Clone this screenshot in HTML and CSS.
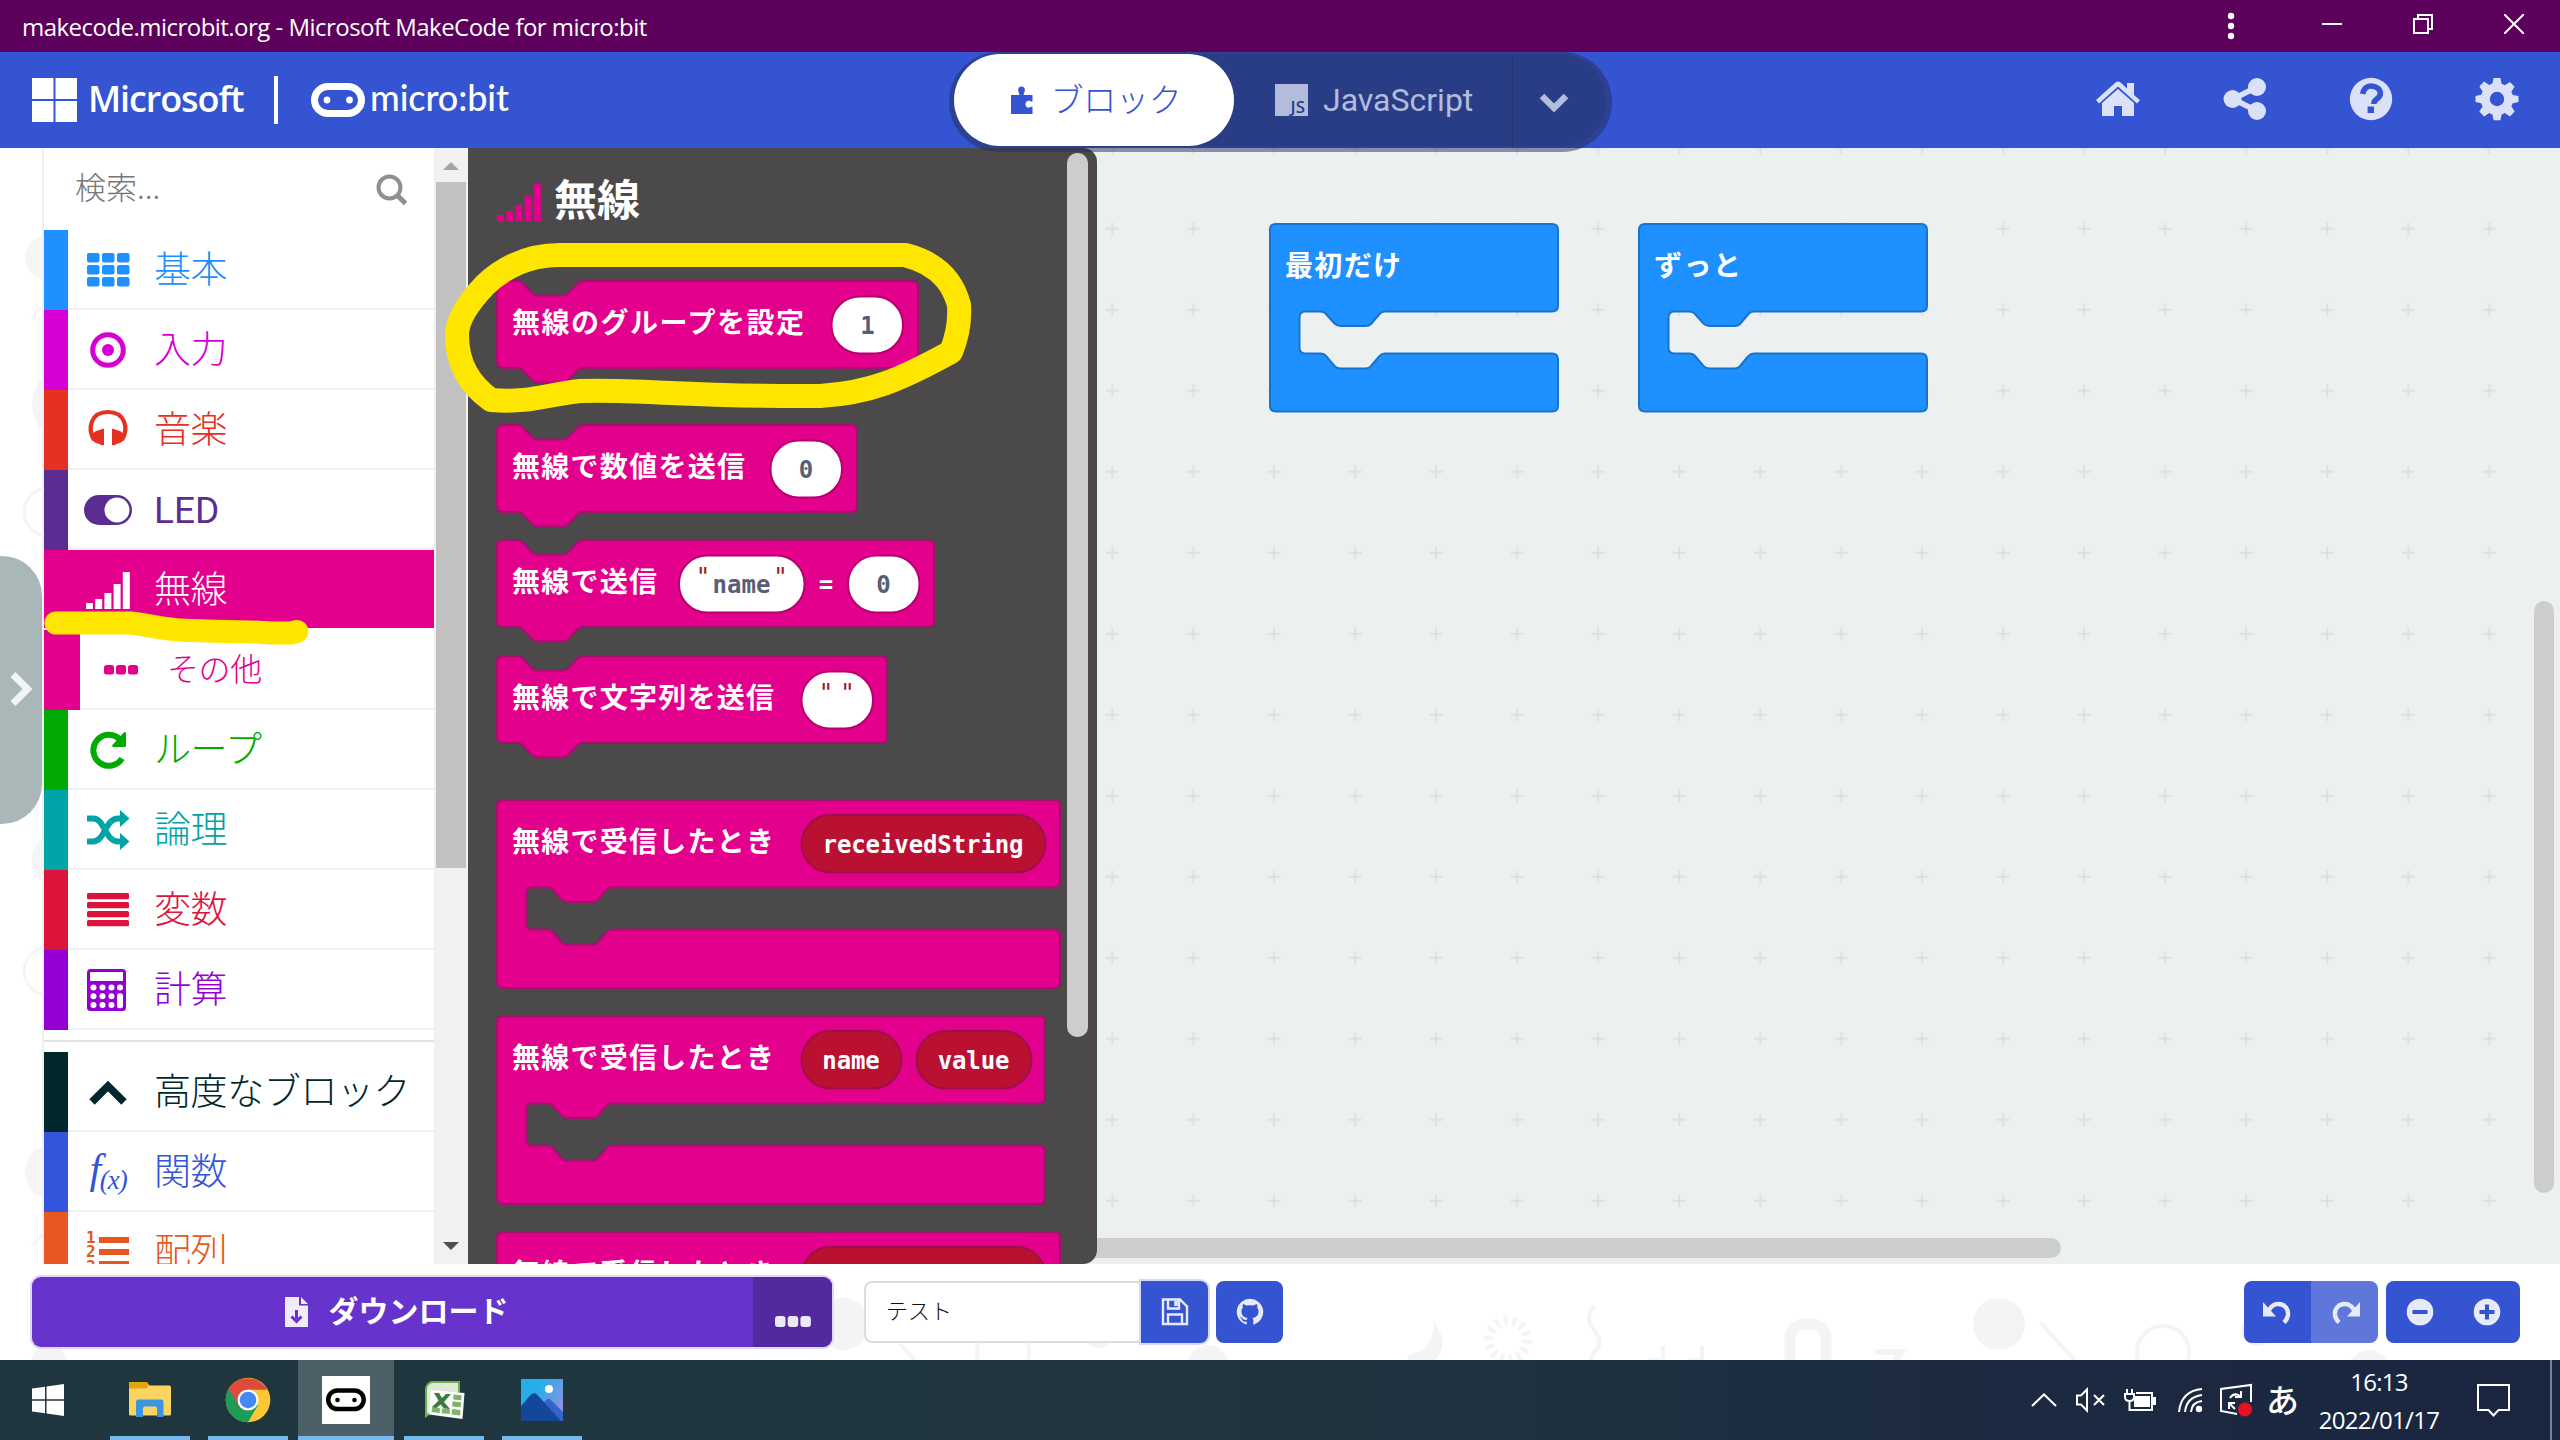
FILE: index.html
```html
<!DOCTYPE html>
<html lang="ja">
<head>
<meta charset="utf-8">
<title>makecode.microbit.org - Microsoft MakeCode for micro:bit</title>
<link rel="stylesheet" href="styles.css">
</head>
<body>
<svg width="0" height="0" class="defs" aria-hidden="true">
  <symbol id="i-signal" viewBox="0 0 44 38"><path d="M0 32h7v6H0zM9.200 28h7v10h-7zM18.400 22h7v16h-7zM27.600 13h7v25h-7zM36.800 1h7v37h-7z"/></symbol>
  <symbol id="i-loop" viewBox="0 0 38 38"><path d="M33 27.500A15.500 15.500 0 1 1 30 7.500" fill="none" stroke="currentColor" stroke-width="6"/><path d="M37 2v12.500q0 1.500-1.500 1.500H24q-1.500-1-.6-2L35 1.200q1.500-.6 2 .8z"/></symbol>
</svg>

<header class="titlebar">
  <span class="titlebar-text">makecode.microbit.org - Microsoft MakeCode for micro:bit</span>
  <div class="window-controls">
    <svg width="8" height="28" viewBox="0 0 8 28" fill="#fff"><circle cx="4" cy="4" r="3.200"/><circle cx="4" cy="14" r="3.200"/><circle cx="4" cy="24" r="3.200"/></svg>
    <svg width="20" height="20" viewBox="0 0 20 20"><path d="M0 10h20" stroke="#fff" stroke-width="2"/></svg>
    <svg width="20" height="20" viewBox="0 0 20 20" fill="none" stroke="#fff" stroke-width="2"><path d="M1 5h14v14H1zM5 5V1h14v14h-4"/></svg>
    <svg width="20" height="20" viewBox="0 0 20 20"><path d="M0 0l20 20M20 0L0 20" stroke="#fff" stroke-width="2"/></svg>
  </div>
</header>

<nav class="menubar">
  <div class="brand">
    <svg width="45" height="44" viewBox="0 0 45 44" fill="#fff"><path d="M0 0h21.500v21H0zM23.500 0H45v21H23.500zM0 23h21.500v21H0zM23.500 23H45v21H23.500z"/></svg>
    <span class="ms">Microsoft</span>
    <i class="brand-rule"></i>
    <svg width="54" height="34" viewBox="0 0 54 34"><rect x="3.500" y="3.500" width="47" height="27" rx="13.500" fill="none" stroke="#fff" stroke-width="7"/><circle cx="16" cy="17" r="3.400" fill="#fff"/><circle cx="38.500" cy="17" r="3.400" fill="#fff"/></svg>
    <span class="mb">micro:bit</span>
  </div>
  <div class="toggle">
    <div class="toggle-blocks">
      <svg width="24" height="30" viewBox="0 0 24 30" fill="#3454d1"><path d="M1 10h7.500c1.500 0 .8-1.400.2-2.600C7.300 4.400 8.600 1.500 11.500 1.500s4.200 2.900 2.800 5.900c-.6 1.200-1.300 2.600.2 2.600H22.500v6c0 1.200-1 .8-2 .3-2.600-1.400-5 .2-5 2.900s2.400 4.300 5 2.900c1-.5 2-.9 2 .3V29H1z"/></svg>
      <span>ブロック</span>
    </div>
    <div class="toggle-js">
      <span class="js-badge">JS</span><span>JavaScript</span>
    </div>
    <div class="toggle-more"><svg width="32" height="22" viewBox="0 0 32 22"><path d="M4 4l12 12L28 4" fill="none" stroke="#b4bcdb" stroke-width="6.500"/></svg></div>
  </div>
  <div class="menu-icons">
    <svg width="46" height="44" viewBox="0 0 46 44"><path d="M1 23L20.500 5.500q2.500-2 5 0L32 11.500V6h7v12l6 5.200-3 3.300L23 9.500 4 26.500z"/><path d="M7 26L23 12l16 14v13H27V29h-8v10H7z"/></svg>
    <svg width="44" height="44" viewBox="0 0 44 44"><circle cx="9.500" cy="22" r="9"/><circle cx="34" cy="10" r="9"/><circle cx="34" cy="34" r="9"/><path d="M34 10L10 22l24 12" fill="none" stroke="currentColor" stroke-width="5.500"/></svg>
    <svg width="44" height="44" viewBox="0 0 44 44"><circle cx="22" cy="22" r="21.200"/><path d="M13.700 17c1-6 5-8 8.500-8 5 0 9.200 3.200 9.200 7.500 0 5-6.400 6-6.400 9v1.500" fill="none" stroke="#3454d1" stroke-width="5.600"/><path d="M18.600 29.500H25V36h-6.400z" fill="#3454d1"/></svg>
    <svg width="44" height="44" viewBox="0 0 44 44"><path fill-rule="evenodd" d="M18.600 1h6.800l1.200 5.800 3.300 1.400 5-3.300 4.800 4.800-3.300 5 1.400 3.300L43.500 19v6l-5.700 1.300-1.400 3.300 3.300 5-4.800 4.800-5-3.300-3.300 1.400-1.200 5.800h-6.800l-1.200-5.800-3.300-1.400-5 3.300-4.800-4.800 3.300-5-1.400-3.300L.5 25v-6l5.700-1.300 1.400-3.300-3.300-5 4.800-4.800 5 3.300 3.300-1.400zM22 14.800a7.200 7.200 0 1 0 0 14.400 7.200 7.200 0 0 0 0-14.400z"/></svg>
  </div>
</nav>

<main class="editor">
  <aside class="gutter">
    <svg class="doodles" width="43" height="1116" viewBox="0 0 43 1116"><g fill="#f5f5f5"><circle cx="47" cy="110" r="22"/><ellipse cx="54" cy="256" rx="22" ry="30"/><circle cx="62" cy="712" r="30"/><circle cx="52" cy="1024" r="27"/></g><g fill="none" stroke="#f5f5f5" stroke-width="3"><circle cx="48" cy="364" r="24"/><circle cx="48" cy="823" r="24"/><path d="M32 1098l14-16M33 170q4-10 12-11"/></g></svg>
    <div class="handle"><svg width="26" height="36" viewBox="0 0 26 36"><path d="M4 3.500L18.500 18 4 32.500" fill="none" stroke="#f2f5f5" stroke-width="7"/></svg></div>
  </aside>

  <section class="toolbox">
    <div class="toolbox-list">
      <div class="search"><span>検索...</span>
        <svg width="32" height="32" viewBox="0 0 32 32" fill="none" stroke="#8f8f8f"><circle cx="13.500" cy="13.500" r="11" stroke-width="4"/><path d="M21.500 21.500l8 8" stroke-width="5"/></svg></div>
      <div class="cat c-basic"><svg width="44" height="44" viewBox="0 0 44 44"><g><rect x="1" y="5" width="12.500" height="9.500" rx="2"/><rect x="16" y="5" width="12.500" height="9.500" rx="2"/><rect x="31" y="5" width="12.500" height="9.500" rx="2"/><rect x="1" y="17" width="12.500" height="9.500" rx="2"/><rect x="16" y="17" width="12.500" height="9.500" rx="2"/><rect x="31" y="17" width="12.500" height="9.500" rx="2"/><rect x="1" y="29" width="12.500" height="9.500" rx="2"/><rect x="16" y="29" width="12.500" height="9.500" rx="2"/><rect x="31" y="29" width="12.500" height="9.500" rx="2"/></g></svg><span>基本</span></div>
      <div class="cat c-input"><svg width="44" height="44" viewBox="0 0 44 44"><circle cx="22" cy="22" r="15.300" fill="none" stroke="currentColor" stroke-width="5"/><circle cx="22" cy="22" r="6"/></svg><span>入力</span></div>
      <div class="cat c-music"><svg width="44" height="44" viewBox="0 0 44 44"><path d="M8 32C1 20 5 4 22 4s21 16 14 28" fill="none" stroke="currentColor" stroke-width="4.200"/><path d="M14 22q4-3 4 0v15q-4 1-4-1-8-1-8-7t8-7zM30 22q-4-3-4 0v15q4 1 4-1 8-1 8-7t-8-7z"/></svg><span>音楽</span></div>
      <div class="cat c-led"><svg width="50" height="44" viewBox="0 0 50 44"><rect x="1" y="7" width="48" height="30" rx="15"/><circle cx="34" cy="22" r="12.500" fill="#fff"/></svg><span>LED</span></div>
      <div class="cat c-radio"><svg width="44" height="38"><use href="#i-signal"/></svg><span>無線</span></div>
      <div class="cat sub c-more"><svg width="34" height="10" viewBox="0 0 34 10"><rect width="10" height="9.500" rx="2.500"/><rect x="12" width="10" height="9.500" rx="2.500"/><rect x="24" width="10" height="9.500" rx="2.500"/></svg><span>その他</span></div>
      <div class="cat c-loops"><svg width="38" height="38"><use href="#i-loop"/></svg><span>ループ</span></div>
      <div class="cat c-logic"><svg width="44" height="40" viewBox="0 0 44 40"><path d="M1 8.500h6c12 0 12 23 25 23h3M1 31.500h6c12 0 12-23 25-23h3" fill="none" stroke="currentColor" stroke-width="6"/><path d="M34 0v17l9.500-8.500zM34 23v17l9.500-8.500z"/></svg><span>論理</span></div>
      <div class="cat c-vars"><svg width="44" height="36" viewBox="0 0 44 36"><rect x="1" y="1" width="42" height="6.300" rx="1.500"/><rect x="1" y="10" width="42" height="6.300" rx="1.500"/><rect x="1" y="19" width="42" height="6.300" rx="1.500"/><rect x="1" y="28" width="42" height="6.300" rx="1.500"/></svg><span>変数</span></div>
      <div class="cat c-math"><svg width="42" height="42" viewBox="0 0 42 42"><rect width="39" height="42" rx="3.500"/><g fill="#fff"><rect x="3" y="3" width="33" height="9" rx="1"/><circle cx="6.500" cy="18.500" r="3"/><circle cx="15.500" cy="18.500" r="3"/><circle cx="24.500" cy="18.500" r="3"/><circle cx="33" cy="18.500" r="3"/><circle cx="6.500" cy="27.300" r="3"/><circle cx="15.500" cy="27.300" r="3"/><circle cx="24.500" cy="27.300" r="3"/><circle cx="6.500" cy="36" r="3"/><circle cx="15.500" cy="36" r="3"/><circle cx="24.500" cy="36" r="3"/><rect x="30" y="24.300" width="6" height="15" rx="2.500"/></g></svg><span>計算</span></div>
      <hr class="divider">
      <div class="cat c-adv"><svg width="40" height="40" viewBox="0 0 40 40"><path d="M4 30l16-16 16 16" fill="none" stroke="currentColor" stroke-width="7.500"/></svg><span>高度なブロック</span></div>
      <div class="cat c-func"><span class="fx">f<small>(x)</small></span><span>関数</span></div>
      <div class="cat c-array"><svg width="44" height="44" viewBox="0 0 44 44"><path d="M13 7h30v6H13zM13 19h30v6H13zM13 31h30v6H13z"/><text x="0" y="12.500" class="num">1</text><text x="0" y="27" class="num">2</text><text x="0" y="41.500" class="num">3</text></svg><span>配列</span></div>
    </div>
    <div class="scrolltrack">
      <i class="arrow up"></i><i class="thumb"></i><i class="arrow down"></i>
    </div>
  </section>

  <section class="flyout">
    <div class="flyout-body">
      <h2><svg width="44" height="38"><use href="#i-signal"/></svg>無線</h2>
      <svg class="blk gap-l" width="421" height="87"><path class="shape" d="M0 6Q0 0 6 0H20Q24 0 26.500 3L35 12Q37 14.500 41 14.500H66Q69.500 14.500 71.500 12L80 3Q82.500 0 86 0H415Q421 0 421 6V81Q421 87 415 87H86Q82.500 87 80 90L71.500 99Q69.500 101.500 66 101.500H41Q37 101.500 35 99L26.500 90Q24 87 20 87H6Q0 87 0 81Z"/><text x="15" y="52" textLength="292">無線のグループを設定</text><rect class="val" x="334.500" y="15.500" width="71.500" height="57" rx="28"/><text class="num-val" x="370.500" y="52.500">1</text></svg>
      <svg class="blk gap-s" width="360" height="87"><path class="shape" d="M0 6Q0 0 6 0H20Q24 0 26.500 3L35 12Q37 14.500 41 14.500H66Q69.500 14.500 71.500 12L80 3Q82.500 0 86 0H354Q360 0 360 6V81Q360 87 354 87H86Q82.500 87 80 90L71.500 99Q69.500 101.500 66 101.500H41Q37 101.500 35 99L26.500 90Q24 87 20 87H6Q0 87 0 81Z"/><text x="15" y="52" textLength="233">無線で数値を送信</text><rect class="val" x="273.500" y="15.500" width="71.500" height="57" rx="28"/><text class="num-val" x="309" y="52.500">0</text></svg>
      <svg class="blk gap-s" width="437" height="87"><path class="shape" d="M0 6Q0 0 6 0H20Q24 0 26.500 3L35 12Q37 14.500 41 14.500H66Q69.500 14.500 71.500 12L80 3Q82.500 0 86 0H431Q437 0 437 6V81Q437 87 431 87H86Q82.500 87 80 90L71.500 99Q69.500 101.500 66 101.500H41Q37 101.500 35 99L26.500 90Q24 87 20 87H6Q0 87 0 81Z"/><text x="15" y="52" textLength="145">無線で送信</text><rect class="val" x="182" y="15.500" width="125.500" height="57" rx="28"/><text class="quote" x="206" y="45">"</text><text class="num-val" x="244.500" y="53">name</text><text class="quote" x="283.500" y="45">"</text><text class="num-val eq" x="329" y="52.500">=</text><rect class="val" x="351" y="15.500" width="71.500" height="57" rx="28"/><text class="num-val" x="386.500" y="52.500">0</text></svg>
      <svg class="blk gap-l" width="390" height="87"><path class="shape" d="M0 6Q0 0 6 0H20Q24 0 26.500 3L35 12Q37 14.500 41 14.500H66Q69.500 14.500 71.500 12L80 3Q82.500 0 86 0H384Q390 0 390 6V81Q390 87 384 87H86Q82.500 87 80 90L71.500 99Q69.500 101.500 66 101.500H41Q37 101.500 35 99L26.500 90Q24 87 20 87H6Q0 87 0 81Z"/><text x="15" y="52" textLength="262">無線で文字列を送信</text><rect class="val" x="304.500" y="15.500" width="71.500" height="57" rx="28"/><text class="quote" x="329" y="45">"</text><text class="quote" x="350.500" y="45">"</text></svg>
      <svg class="blk gap-s" width="563" height="188"><path class="shape" d="M0 6Q0 0 6 0H557Q563 0 563 6V81.500Q563 87.500 557 87.500H115Q111.500 87.500 109.500 90L101 100Q99 102 95.500 102H70.500Q67 102 64.500 99.500L56 90Q54 87.500 50 87.500H35.500Q29.500 87.500 29.500 93.500V123.500Q29.500 129.500 35.500 129.500H50Q54 129.500 56 132L64.500 142Q67 144.500 70.500 144.500H95.500Q99 144.500 101 142L109.500 132Q111.500 129.500 115 129.500H557Q563 129.500 563 135.500V182Q563 188 557 188H6Q0 188 0 182Z"/><text x="15" y="52" textLength="262">無線で受信したとき</text><rect class="var" x="304.500" y="15" width="244" height="57.500" rx="28.700"/><text class="var-name" x="426" y="52.500">receivedString</text></svg>
      <svg class="blk gap-s" width="548" height="188"><path class="shape" d="M0 6Q0 0 6 0H542Q548 0 548 6V81.500Q548 87.500 542 87.500H115Q111.500 87.500 109.500 90L101 100Q99 102 95.500 102H70.500Q67 102 64.500 99.500L56 90Q54 87.500 50 87.500H35.500Q29.500 87.500 29.500 93.500V123.500Q29.500 129.500 35.500 129.500H50Q54 129.500 56 132L64.500 142Q67 144.500 70.500 144.500H95.500Q99 144.500 101 142L109.500 132Q111.500 129.500 115 129.500H542Q548 129.500 548 135.500V182Q548 188 542 188H6Q0 188 0 182Z"/><text x="15" y="52" textLength="262">無線で受信したとき</text><rect class="var" x="304.500" y="15" width="100" height="57.500" rx="28.700"/><text class="var-name" x="354" y="52.500">name</text><rect class="var" x="419.500" y="15" width="115" height="57.500" rx="28.700"/><text class="var-name" x="476.500" y="52.500">value</text></svg>
      <svg class="blk" width="563" height="188"><path class="shape" d="M0 6Q0 0 6 0H557Q563 0 563 6V188H0Z"/><text x="15" y="52" textLength="262">無線で受信したとき</text><rect class="var" x="304.500" y="15" width="244" height="57.500" rx="28.700"/><text class="var-name" x="426" y="52.500">receivedNumber</text></svg>
    </div>
    <i class="flyout-thumb"></i>
  </section>

  <section class="workspace">
    <svg class="canvas" width="1479" height="1116">
      <defs><pattern id="grid" width="81" height="81" patternUnits="userSpaceOnUse" x="-9.300" y="40.300"><path d="M34 40.500h13M40.500 34v13" stroke="#d6dbdc" stroke-width="1.400"/></pattern></defs>
      <rect width="1479" height="1116" fill="url(#grid)"/>
      <g class="event" transform="translate(189 76)"><path class="shape" d="M0 6Q0 0 6 0H282Q288 0 288 6V81.500Q288 87.500 282 87.500H115Q111.500 87.500 109.500 90L101 100Q99 102 95.500 102H70.500Q67 102 64.500 99.500L56 90Q54 87.500 50 87.500H35.500Q29.500 87.500 29.500 93.500V123.500Q29.500 129.500 35.500 129.500H50Q54 129.500 56 132L64.500 142Q67 144.500 70.500 144.500H95.500Q99 144.500 101 142L109.500 132Q111.500 129.500 115 129.500H282Q288 129.500 288 135.500V181.500Q288 187.500 282 187.500H6Q0 187.500 0 181.500Z"/><text x="15" y="52" textLength="116">最初だけ</text></g>
      <g class="event" transform="translate(558 76)"><path class="shape" d="M0 6Q0 0 6 0H282Q288 0 288 6V81.500Q288 87.500 282 87.500H115Q111.500 87.500 109.500 90L101 100Q99 102 95.500 102H70.500Q67 102 64.500 99.500L56 90Q54 87.500 50 87.500H35.500Q29.500 87.500 29.500 93.500V123.500Q29.500 129.500 35.500 129.500H50Q54 129.500 56 132L64.500 142Q67 144.500 70.500 144.500H95.500Q99 144.500 101 142L109.500 132Q111.500 129.500 115 129.500H282Q288 129.500 288 135.500V181.500Q288 187.500 282 187.500H6Q0 187.500 0 181.500Z"/><text x="15" y="52" textLength="87">ずっと</text></g>
    </svg>
    <i class="ws-thumb-v"></i><i class="ws-thumb-h"></i>
  </section>
</main>

<footer class="bottombar">
  <svg class="doodles" width="2560" height="96" viewBox="0 0 2560 96"><g fill="#f4f4f4"><circle cx="843" cy="60" r="26"/><circle cx="49" cy="99" r="18"/><circle cx="1999" cy="60" r="26"/><circle cx="1208" cy="101" r="20"/><circle cx="1098" cy="70" r="14"/><circle cx="2369" cy="106" r="20"/><circle cx="2257" cy="66" r="16"/><path d="M1433 57q18 22 2 39h-28q2-8 12-8 16-8 14-31z"/></g><g fill="none" stroke="#f4f4f4" stroke-width="4"><circle cx="1003" cy="88" r="26"/><circle cx="2163" cy="88" r="26"/><path d="M900 80l18 20M2040 58l38 42M1594 42q-10 12 0 24t2 20-2 14M1663 82v18M1702 82v18M1648 96h12M1688 96h12"/><path d="M1790 96V76q0-16 18-16t18 16v20" stroke-width="11"/><path d="M1876 88h26l-10 12" stroke-width="6"/><circle cx="1508" cy="76" r="19" stroke-width="10" stroke-dasharray="3.500 5"/></g></svg>
  <div class="download">
    <div class="download-main"><svg width="26" height="30" viewBox="0 0 26 30"><path d="M1 0h14v8.500h9V30H1zM17 0l7 7h-7z" fill="#f0ebfa"/><path d="M12.500 13v9M7.500 19.500l5 5 5-5" fill="none" stroke="#6633cc" stroke-width="3"/></svg><span>ダウンロード</span></div>
    <div class="download-more"><svg width="36" height="11" viewBox="0 0 36 11" fill="#ede8f7"><rect width="10.500" height="11" rx="3"/><rect x="12.700" width="10.500" height="11" rx="3"/><rect x="25.400" width="10.500" height="11" rx="3"/></svg></div>
  </div>
  <div class="project"><span class="project-name">テスト</span><button class="btn save"><svg width="28" height="28" viewBox="0 0 28 28" fill="none" stroke="#e6eafa" stroke-width="2.400"><path d="M2 1.500h17l7 7V26H2zM7 1.500v9h11v-9M7 26v-9.500h14V26"/><path d="M15 3v5" stroke-width="3.500"/></svg></button></div>
  <button class="btn github"><svg width="28" height="28" viewBox="0 0 28 28"><path fill="#e6eafa" d="M14 .7a13.300 13.300 0 0 0-4.200 25.900c.7.100.9-.3.900-.6v-2.400c-3.700.8-4.500-1.700-4.500-1.700-.6-1.500-1.500-1.900-1.500-1.900-1.200-.8.100-.8.100-.8 1.300.1 2 1.400 2 1.400 1.200 2 3.100 1.400 3.900 1.100.1-.9.500-1.500.9-1.800-3-.3-6.100-1.500-6.100-6.600 0-1.500.5-2.700 1.400-3.600-.2-.3-.6-1.700.1-3.500 0 0 1.100-.4 3.700 1.400a12.600 12.600 0 0 1 6.600 0c2.600-1.800 3.700-1.400 3.700-1.400.7 1.800.3 3.200.1 3.500.9.900 1.400 2.100 1.400 3.600 0 5.100-3.100 6.300-6.100 6.600.5.400.9 1.200.9 2.500V26c0 .3.200.8.900.6A13.300 13.300 0 0 0 14 .7z"/></svg></button>
  <div class="bar-right">
    <div class="pair"><button class="btn"><svg width="30" height="28" viewBox="0 0 30 28"><path d="M6 12C11 2 26 5 25 17q-.5 4-4 7.500" fill="none" stroke="#e6eafa" stroke-width="4.500"/><path d="M0 4v14.500h13z" fill="#e6eafa"/></svg></button><button class="btn faded"><svg width="30" height="28" viewBox="0 0 30 28"><path d="M24 12C19 2 4 5 5 17q.5 4 4 7.500" fill="none" stroke="#e6eafa" stroke-width="4.500"/><path d="M30 4v14.500H17z" fill="#e6eafa"/></svg></button></div>
    <div class="pair"><button class="btn"><svg width="28" height="28" viewBox="0 0 28 28"><circle cx="14" cy="14" r="13.300" fill="#e6eafa"/><path d="M6.500 14h15" stroke="#3454d1" stroke-width="4"/></svg></button><button class="btn"><svg width="28" height="28" viewBox="0 0 28 28"><circle cx="14" cy="14" r="13.300" fill="#e6eafa"/><path d="M6.500 14h15M14 6.500v15" stroke="#3454d1" stroke-width="4"/></svg></button></div>
  </div>
</footer>

<div class="taskbar">
  <div class="start"><svg width="32" height="32" viewBox="0 0 32 32" fill="#fff"><path d="M0 4.500l13-1.800v12.600H0zM14.500 2.500L32 0v15.300H14.500zM0 16.700h13v12.600L0 27.500zM14.500 16.700H32V32l-17.500-2.500z"/></svg></div>
  <div class="apps">
    <div class="app"><svg width="44" height="36" viewBox="0 0 44 36"><path d="M1 0h18l3 4h-2l-3 4H1z" fill="#e2a50b"/><path d="M1 6.500h16q2 0 3-3h21q2 0 2 2V32q0 1.500-1.500 1.500h-39Q1 33.500 1 32z" fill="#fcd462"/><path d="M8 35V20q0-2.500 2.500-2.500H33q2.500 0 2.500 2.500v15H29v-8.500q0-2-2-2H17q-2 0-2 2V35z" fill="#3b96dd"/></svg></div>
    <div class="app"><svg width="46" height="46" viewBox="0 0 46 46"><circle cx="23" cy="23" r="22.300" fill="#fcc934"/><path d="M23 23L3.700 11.900A22.300 22.300 0 0 0 23 45.300L33 28z" fill="#1e9c57"/><path d="M3.700 11.900A22.300 22.300 0 0 1 42.300 12.800H23L13.500 28.500z" fill="#df4a3c"/><circle cx="23" cy="23" r="10.500" fill="#fff"/><circle cx="23" cy="23" r="8.300" fill="#4688f1"/></svg></div>
    <div class="app active"><svg width="48" height="48" viewBox="0 0 48 48"><path fill="#fff" d="M0 0h48v48H0z"/><rect x="6.200" y="14.500" width="35.500" height="18.500" rx="9.250" fill="none" stroke="#000" stroke-width="4.500"/><circle cx="15.500" cy="24" r="2.300"/><circle cx="32.500" cy="24" r="2.300"/></svg></div>
    <div class="app"><svg width="42" height="40" viewBox="0 0 42 40"><path d="M9 2h27v10L3 36V9q1-6 6-7z" fill="#dfe9d9" stroke="#6fb04c" stroke-width="2"/><path d="M8 10l33.500 3-2 26L6 34.500z" fill="#fbfdfa"/><path d="M11 13h5l3 5 4-4h5l-7 8 6 7-6-.5-3.500-4-4 3.500-5-.5 7-7z" fill="#3d7c3a"/><path d="M30.500 14.500l8 .7-.3 5-8-.7zM29.500 21.500l8.500.8-.3 5-8.500-.7zM29 29l8.500.9-.4 5.600-8.500-1zM19 28.500l8 .8-.4 4.800-8-.9zM9 27.500l8 .8-.4 4.700-8-1z" fill="#7fb26a"/></svg></div>
    <div class="app"><svg width="42" height="42" viewBox="0 0 42 42"><defs><linearGradient id="sky" x2="1" y2=".6"><stop offset=".4" stop-color="#27aeea"/><stop offset="1" stop-color="#8a93e0"/></linearGradient></defs><path fill="url(#sky)" d="M0 0h42v42H0z"/><path d="M18 42V29l7-8q2.500-2.500 5 0l12 12v9z" fill="#3a62cd"/><path d="M0 27l10-11.500q3-2.500 6 0L40 42H0z" fill="#12479a"/><circle cx="28" cy="10" r="4" fill="#fff"/></svg></div>
  </div>
  <div class="tray">
    <svg width="26" height="14" viewBox="0 0 26 14"><path d="M1 13L13 1.500 25 13" fill="none" stroke="#fff" stroke-width="2"/></svg>
    <svg width="29" height="26" viewBox="0 0 29 26" fill="none" stroke="#fff" stroke-width="2"><path d="M1 8.500h4l6-6v21l-6-6H1zM18 8l10 10M28 8L18 18"/></svg>
    <svg width="32" height="24" viewBox="0 0 32 24" fill="none" stroke="#fff" stroke-width="2"><path d="M3 1v4M8 1v4M1 6h9v3q0 4-4.500 4T1 9zM5.500 13v9H28V5H12"/><path d="M10 8h16v11H10z" fill="#fff" stroke="none"/><path d="M30.500 9v8" stroke-width="3"/></svg>
    <svg width="25" height="26" viewBox="0 0 25 26" fill="none" stroke="#fff" stroke-width="2"><path d="M1 25Q3 4 24 2M7 25Q8.500 10 24 8M13 25q1-10 11-11"/><circle cx="21" cy="22" r="3.200" fill="#fff" stroke="none"/></svg>
    <svg width="33" height="34" viewBox="0 0 33 34" fill="none" stroke="#fff" stroke-width="2"><path d="M31 19V2L1 6v22l16 3"/><path d="M10 15q4-6 10-2M21 8v6h-6M9 26v-6h6M9 20l6 6"/><circle cx="25" cy="26.500" r="7" fill="#e81123" stroke="none"/></svg>
    <span class="ime">あ</span>
    <div class="clock"><span>16:13</span><span>2022/01/17</span></div>
    <svg width="34" height="34" viewBox="0 0 34 34"><path d="M1 2h31v25h-10.500l-5 5.500-5-5.500H1z" fill="none" stroke="#fff" stroke-width="2"/></svg>
    <i class="peek"></i>
  </div>
</div>

<svg class="marker" width="2560" height="1440" viewBox="0 0 2560 1440"><path stroke-width="24" d="M905 255H560C530 255 505 266 485 285C468 303 457 320 457 335C457 365 470 385 491 400C530 403 545 395 580 391C640 389 690 397 820 396C870 393 900 380 951 352C958 335 960 320 959 305C955 290 945 265 905 255Z"/><path stroke-width="23" d="M56 623H130C150 625 160 629 180 630C215 632 250 631 270 633H291L297 631.500"/></svg>
</body>
</html>
```
FILE: styles.css
```css
* { box-sizing: border-box; }
body {
  margin: 0;
  width: 2560px;
  height: 1440px;
  overflow: hidden;
  position: relative;
  display: flex;
  flex-direction: column;
  font-family: Roboto, "Noto Sans CJK JP", sans-serif;
  background: #fff;
}
svg { display: block; flex: none; }
button { border: 0; padding: 0; font: inherit; }
.defs { position: absolute; }

/* window title */
.titlebar {
  height: 52px;
  flex: none;
  background: #5c005c;
  color: #fff;
  display: flex;
  align-items: center;
  justify-content: space-between;
  padding: 0 36px 0 22px;
}
.titlebar-text { font: 24px/1 "Open Sans", sans-serif; letter-spacing: -0.53px; padding-top: 2px; }
.window-controls { display: flex; align-items: center; gap: 71px; padding-bottom: 4px; }
.window-controls svg:first-child { margin-right: 16px; position: relative; top: 2px; }

/* menu bar */
.menubar {
  height: 96px;
  flex: none;
  background: #3454d1;
  display: grid;
  grid-template-columns: 949px 663px 1fr;
  grid-template-rows: 96px;
  position: relative;
  z-index: 3;
}
.brand { display: flex; align-items: center; padding-left: 32px; color: #fff; }
.ms { font: 600 36px/1 "Open Sans", sans-serif; letter-spacing: -1.1px; width: 155px; margin: 0 31px 0 11px; padding-bottom: 3px; }
.brand-rule { width: 4px; height: 48px; background: #fff; margin-right: 33px; }
.mb { font: 500 36px/1 Lato, sans-serif; letter-spacing: -.1px; margin-left: 5px; padding-bottom: 7px; }
.toggle {
  height: 100px;
  border: 6px solid rgba(35, 46, 88, .5);
  border-top-width: 2px;
  border-left-width: 5px;
  border-radius: 50px;
  background: #293d87;
  background-clip: padding-box;
  display: flex;
  color: #b4bcdb;
  font-size: 32px;
}
.toggle-blocks {
  width: 280px;
  background: #fff;
  border-radius: 46px;
  color: #3454d1;
  display: flex;
  align-items: center;
  justify-content: center;
  gap: 17px;
  font-family: "Noto Sans CJK JP", sans-serif;
  font-size: 33px;
  font-weight: 300;
  line-height: 1;
  padding-left: 3px;
}
.toggle-blocks span { padding-bottom: 4px; letter-spacing: -.3px; }
.toggle-js { width: 279px; display: flex; align-items: center; padding-left: 41px; gap: 15px; border-right: 1px solid #233471; }
.js-badge { width: 33px; height: 32px; background: #b4bcdb; color: #293d87; font: 600 17px/1 "Open Sans", sans-serif; display: flex; align-items: flex-end; justify-content: flex-end; padding: 0 3px 1px 0; }
.toggle-more { flex: 1; display: flex; align-items: center; justify-content: center; padding: 5px 11px 0 0; }
.menu-icons { display: flex; align-items: center; justify-content: flex-end; gap: 82px; padding: 0 41px 1px 0; color: #dbe1f8; fill: #dbe1f8; transform: translateY(-1px); }

/* editor */
.editor { height: 1116px; flex: none; display: flex; overflow: hidden; }
.gutter { width: 44px; border-right: 2px solid #ecf0f1; position: relative; display: flex; align-items: center; flex: none; }
.doodles { position: absolute; left: 0; top: 0; }
.handle { width: 43px; height: 268px; margin-top: -32px; background: #a9b7b8; border-radius: 0 40px 40px 0; display: flex; align-items: center; padding: 0 0 3px 9px; position: relative; }

.toolbox { width: 424px; flex: none; display: flex; }
.toolbox-list { width: 390px; height: 1116px; overflow: hidden; }
.search { height: 82px; display: flex; justify-content: space-between; align-items: center; padding: 0 26px 0 31px; font: 300 31px/1 "Noto Sans CJK JP", sans-serif; color: #777; }
.search span { padding-bottom: 7px; }
.search svg { margin-top: 2px; }
.cat {
  height: 80px;
  display: grid;
  grid-template-columns: 80px 1fr;
  align-items: center;
  border-left: 24px solid currentColor;
  background: linear-gradient(#ecf0f1, #ecf0f1) bottom / 100% 2px no-repeat;
  font-size: 37px;
  font-weight: 300;
  line-height: 1;
}
.cat > svg { fill: currentColor; justify-self: center; }
.cat > span { padding: 0 0 6px 0; white-space: nowrap; font-family: "Noto Sans CJK JP", sans-serif; letter-spacing: -.4px; margin-left: 6px; }
.cat.c-led > span { font-family: Roboto, sans-serif; padding: 0; font-weight: 400; letter-spacing: 0; }
.cat.sub { border-left-width: 36px; font-size: 32px; grid-template-columns: 81px 1fr; }
.c-basic { color: #1e90ff; }
.c-input { color: #d400d4; }
.c-music { color: #e63022; }
.c-led { color: #5c2d91; }
.c-radio { color: #e3008c; background: #e3008c; height: 78px; margin-bottom: 2px; }
.c-radio > svg, .c-radio > span { color: #fff; position: relative; top: 1px; }
.c-more { color: #e3008c; }
.c-loops { color: #00aa00; }
.c-logic { color: #00a4a6; }
.c-vars { color: #dc143c; }
.c-math { color: #9400d3; }
.c-adv { color: #00272b; }
.c-func { color: #3455db; }
.c-array { color: #e65722; }
.divider { height: 2px; border: 0; background: #e2e2e2; margin: 10px 0; }
.cat > .fx { font: italic 42px/1 "Liberation Serif", serif; justify-self: center; margin: 0; padding: 0 0 2px; }
.fx small { font-size: 27px; letter-spacing: -1px; vertical-align: -6px; margin-left: -1px; }
.num { font: 700 16px "DejaVu Sans Mono", monospace; }
.scrolltrack { width: 34px; background: #f1f1f1; display: flex; flex-direction: column; align-items: center; }
.arrow { border: 8px solid transparent; border-top-width: 0; }
.up { margin-top: 14px; border-bottom: 8px solid #a3a3a3; }
.down { margin: auto 0 14px; border-bottom-width: 0; border-top: 8px solid #505050; }
.thumb { width: 30px; height: 686px; margin-top: 12px; background: #c1c1c1; }

/* flyout */
.flyout { width: 629px; height: 1116px; flex: none; background: #4b4949; border-radius: 0 14px 14px 0; display: flex; overflow: hidden; position: relative; z-index: 1; }
.flyout-body { width: 599px; padding-left: 29px; flex: none; }
.flyout h2 { height: 133px; margin: 0; display: flex; padding: 28px 0 0 0; gap: 13px; color: #fff; font: 700 43px/1 "Noto Sans CJK JP", sans-serif; }
.flyout h2 svg { fill: #e3008c; margin-top: 7px; }
.blk { overflow: visible; }
.gap-l { margin-bottom: 57px; }
.gap-s { margin-bottom: 28.300px; }
.shape { fill: #e3008c; stroke: #a3106d; stroke-width: 2; }
.blk text, .event text { fill: #fff; font: 700 28px "Noto Sans CJK JP", sans-serif; }
.blk .val { fill: #fff; stroke: #b60070; stroke-width: 2; }
.blk .var { fill: #ba1031; stroke: #9c0f4a; stroke-width: 2; }
.blk .num-val { fill: #575e75; font: 700 24px "DejaVu Sans Mono", monospace; text-anchor: middle; }
.blk .eq { fill: #fff; }
.blk .quote { fill: #a31515; font: 24px "DejaVu Sans Mono", monospace; text-anchor: middle; }
.blk .var-name { font: 700 24px "DejaVu Sans Mono", monospace; text-anchor: middle; letter-spacing: -.1px; }
.flyout-thumb { width: 21px; height: 884px; margin-top: 5px; background: #cdcdcd; border-radius: 10px; }

/* workspace */
.workspace { width: 1479px; flex: none; margin-left: -16px; background: #ecf0f1; position: relative; overflow: hidden; }
.event .shape { fill: #1e90ff; stroke: #1873cc; }
.ws-thumb-v { position: absolute; left: 1453px; top: 453px; width: 20px; height: 592px; border-radius: 10px; background: #cdcdcd; }
.ws-thumb-h { position: absolute; left: -10px; top: 1090px; width: 990px; height: 20px; border-radius: 10px; background: #cdcdcd; }

/* bottom bar */
.bottombar { height: 96px; flex: none; position: relative; background: #fff; display: flex; align-items: center; padding: 0 40px 0 32px; }
.download { width: 800px; height: 70px; display: flex; border-radius: 9px; overflow: hidden; background: #6633cc; box-shadow: 0 0 0 2px #e0d6f5; position: relative; }
.download-main { width: 721px; display: flex; align-items: center; justify-content: center; gap: 19px; color: #fff; font: 700 30px/1 "Noto Sans CJK JP", sans-serif; padding-left: 7px; }
.download-main svg { margin-bottom: 1px; }
.download-main span { padding-bottom: 7px; }
.download-more { flex: 1; background: #52299e; display: flex; justify-content: center; align-items: center; padding: 19px 0 0 1px; }
.project { margin-left: 32px; display: flex; position: relative; width: 344px; height: 62px; }
.project-name { flex: 1; border: 2px solid #ddd; border-right: 0; border-radius: 8px 0 0 8px; background: #fff; display: flex; align-items: center; padding: 0 0 6px 20px; font: 300 22px/1 "Noto Sans CJK JP", sans-serif; color: #111; }
.btn { width: 67px; height: 62px; background: #3454d1; display: flex; align-items: center; justify-content: center; position: relative; }
.save { border-radius: 0 8px 8px 0; box-shadow: 0 0 0 2px #d3daf5; }
.github { margin-left: 8px; border-radius: 8px; }
.bar-right { margin-left: auto; display: flex; gap: 8px; }
.pair { display: flex; border-radius: 8px; overflow: hidden; position: relative; }
.faded { background: #5f77db; }

/* taskbar */
.taskbar { height: 80px; flex: none; display: flex; background: linear-gradient(90deg, #20363e 0, #20363e 36%, #203340 55%, #1c2b40 75%, #1a2540 100%); }
.start { width: 102px; display: flex; align-items: center; padding-left: 32px; }
.apps { display: flex; }
.app { width: 80px; margin: 0 8px 0 8px; display: flex; align-items: center; justify-content: center; border-bottom: 4px solid #76b9ed; padding-top: 4px; }
.app:nth-child(2) { margin-left: 10px; }
.app.active { width: 96px; margin: 0 2px; background: #4e6067; }
.app:nth-child(5) { margin-left: 10px; }
.tray { margin-left: auto; display: flex; align-items: center; color: #fff; }
.tray > svg { margin-right: 19px; }
.tray > svg:nth-child(3) { margin-right: 22px; }
.tray > svg:nth-child(4) { margin-right: 17px; }
.ime { font: 500 33px/1 "Noto Sans CJK JP", sans-serif; width: 33px; margin-left: -6px; padding-bottom: 2px; }
.clock { width: 154px; margin-left: 3px; padding-top: 1px; display: flex; flex-direction: column; align-items: center; font: 24px/38px "Open Sans", sans-serif; letter-spacing: -.7px; }
.tray > .clock + svg { margin: 0 39px 0 21px; }
.peek { width: 2px; height: 80px; background: #7c8391; margin-right: 8px; }

/* highlighter strokes drawn over the whole screen */
.marker { position: absolute; left: 0; top: 0; z-index: 5; fill: none; stroke: #ffe600; stroke-linecap: round; stroke-linejoin: round; }
```
